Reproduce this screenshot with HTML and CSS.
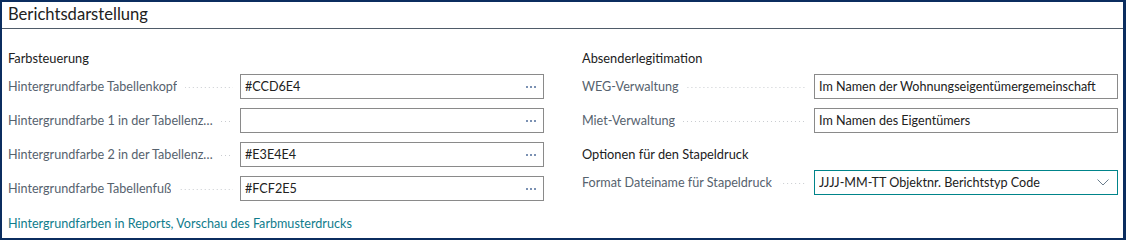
FILE: index.html
```html
<!DOCTYPE html>
<html lang="de">
<head>
  <meta charset="UTF-8">
  <meta name="viewport" content="width=device-width, initial-scale=1.0">
  <title>Berichtsdarstellung</title>
  <link rel="stylesheet" href="styles.css">
</head>
<body>

  <div class="card">
    <div class="card-header">
      <h2 class="card-title">Berichtsdarstellung</h2>
    </div>

    <div class="card-body">

      <!-- Farbsteuerung -->
      <div class="column">
        <h3 class="group-title">Farbsteuerung</h3>

        <div class="field">
          <label class="field-label"><span class="caption">Hintergrundfarbe Tabellenkopf</span><span class="leader"></span></label>
          <div class="input">
            <span class="value">#CCD6E4</span>
            <svg class="assist" width="12" height="4" viewBox="0 0 12 4"><circle cx="2" cy="2" r="1"/><circle cx="6" cy="2" r="1"/><circle cx="10" cy="2" r="1"/></svg>
          </div>
        </div>

        <div class="field">
          <label class="field-label"><span class="caption">Hintergrundfarbe 1 in der Tabellenzeile</span><span class="leader"></span></label>
          <div class="input">
            <span class="value"></span>
            <svg class="assist" width="12" height="4" viewBox="0 0 12 4"><circle cx="2" cy="2" r="1"/><circle cx="6" cy="2" r="1"/><circle cx="10" cy="2" r="1"/></svg>
          </div>
        </div>

        <div class="field">
          <label class="field-label"><span class="caption">Hintergrundfarbe 2 in der Tabellenzeile</span><span class="leader"></span></label>
          <div class="input">
            <span class="value">#E3E4E4</span>
            <svg class="assist" width="12" height="4" viewBox="0 0 12 4"><circle cx="2" cy="2" r="1"/><circle cx="6" cy="2" r="1"/><circle cx="10" cy="2" r="1"/></svg>
          </div>
        </div>

        <div class="field">
          <label class="field-label"><span class="caption">Hintergrundfarbe Tabellenfuß</span><span class="leader"></span></label>
          <div class="input">
            <span class="value">#FCF2E5</span>
            <svg class="assist" width="12" height="4" viewBox="0 0 12 4"><circle cx="2" cy="2" r="1"/><circle cx="6" cy="2" r="1"/><circle cx="10" cy="2" r="1"/></svg>
          </div>
        </div>

        <a class="link" href="#">Hintergrundfarben in Reports, Vorschau des Farbmusterdrucks</a>
      </div>

      <!-- Absenderlegitimation / Stapeldruck -->
      <div class="column">
        <h3 class="group-title">Absenderlegitimation</h3>

        <div class="field">
          <label class="field-label"><span class="caption">WEG-Verwaltung</span><span class="leader"></span></label>
          <div class="input">
            <span class="value">Im Namen der Wohnungseigentümergemeinschaft</span>
          </div>
        </div>

        <div class="field">
          <label class="field-label"><span class="caption">Miet-Verwaltung</span><span class="leader"></span></label>
          <div class="input">
            <span class="value">Im Namen des Eigentümers</span>
          </div>
        </div>

        <h3 class="group-title spaced">Optionen für den Stapeldruck</h3>

        <div class="field">
          <label class="field-label"><span class="caption">Format Dateiname für Stapeldruck</span><span class="leader"></span></label>
          <div class="input select">
            <span class="value">JJJJ-MM-TT Objektnr. Berichtstyp Code</span>
            <svg class="chevron" width="12" height="7" viewBox="0 0 12 7"><polyline points="0.5,0.5 6,6 11.5,0.5"/></svg>
          </div>
        </div>
      </div>

    </div>
  </div>

</body>
</html>
```

FILE: styles.css
```css
* {
  box-sizing: border-box;
}

body {
  margin: 0;
  background: #fff;
  font-family: Lato, 'Noto Sans', sans-serif;
  font-size: 12.6px;
  color: #212121;
}

/* Card frame */
.card {
  height: 240px;
  border: 2px solid #0b2d5f;
  border-right-width: 3px;
  background: #fff;
}

.card-header {
  height: 27px;
  border-bottom: 1px solid #4f5b69;
  padding: 0 6px;
}

.card-title {
  margin: 0;
  font-size: 16.6px;
  font-weight: normal;
  line-height: 24px;
  color: #212121;
}

.card-body {
  display: grid;
  grid-template-columns: 1fr 1fr;
  column-gap: 38px;
  padding: 20px 5px 0 6px;
}

.column {
  display: flex;
  flex-direction: column;
}

/* Group titles */
.group-title {
  margin: 0 0 7px;
  font-size: 12.8px;
  font-weight: normal;
  line-height: 18px;
  color: #212121;
}

.group-title.spaced {
  margin-top: 3px;
}

/* Fields */
.field {
  display: grid;
  grid-template-columns: 232px 1fr;
  height: 25px;
  margin-bottom: 9px;
}

.field-label {
  display: flex;
  align-items: center;
  min-width: 0;
  padding-right: 7px;
  color: #56626e;
}

.caption {
  flex: 0 1 auto;
  max-width: 205px;
  min-width: 0;
  white-space: nowrap;
  overflow: hidden;
  text-overflow: ellipsis;
}

.leader {
  flex: 1 1 auto;
  min-width: 8px;
  height: 2px;
  margin: 2px 0 0 8px;
  background-image: linear-gradient(to right, #c9ccd0 1px, transparent 1px);
  background-size: 4px 1px;
  background-repeat: repeat-x;
  background-position: right center;
}

.input {
  display: flex;
  align-items: center;
  border: 1px solid #8a8a8a;
  padding: 0 6px 0 4px;
  min-width: 0;
}

.value {
  flex: 1 1 auto;
  white-space: nowrap;
  overflow: hidden;
  color: #212121;
}

.assist {
  flex: none;
  fill: #4f6d9a;
}

.input.select {
  border-color: #00848a;
}

.chevron {
  flex: none;
  margin-right: 2px;
  fill: none;
  stroke: #6b7d8c;
  stroke-width: 1;
}

/* Link */
.link {
  margin-top: 5px;
  line-height: 18px;
  color: #0f7c8c;
  text-decoration: none;
}
```
